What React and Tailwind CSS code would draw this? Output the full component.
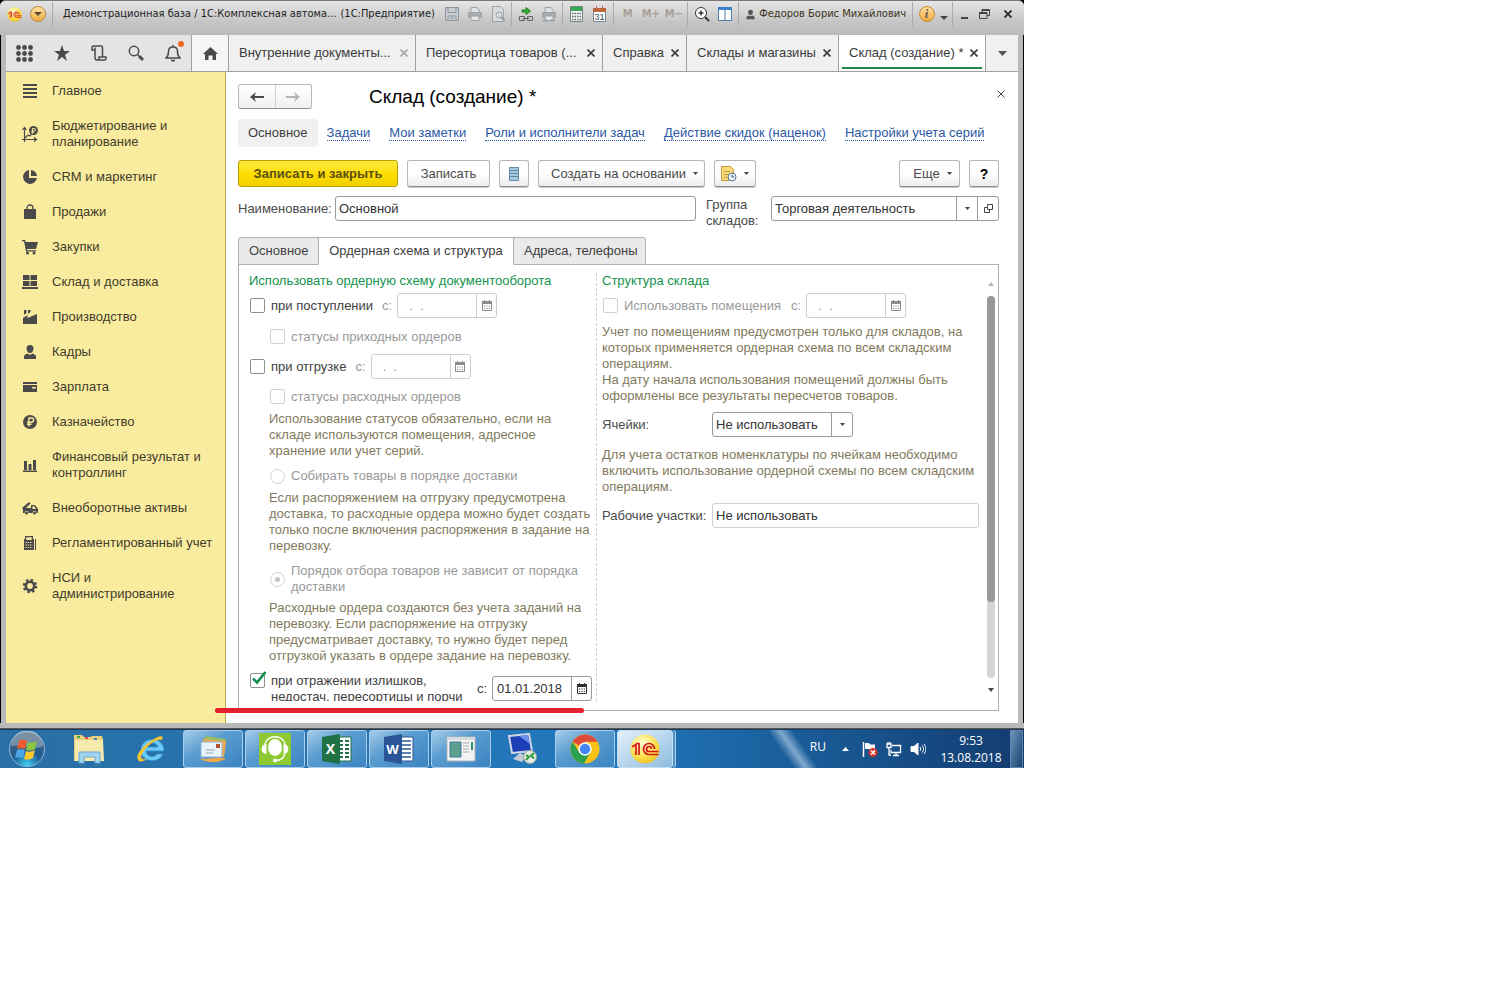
import { useState } from 'react';
import clsx from 'clsx';

const NAV_ITEMS = [
  { label: 'Главное', icon: 'lines' },
  { label: 'Бюджетирование и планирование', icon: 'budget', tall: true },
  { label: 'CRM и маркетинг', icon: 'pie' },
  { label: 'Продажи', icon: 'bag' },
  { label: 'Закупки', icon: 'cart' },
  { label: 'Склад и доставка', icon: 'boxes' },
  { label: 'Производство', icon: 'factory' },
  { label: 'Кадры', icon: 'person' },
  { label: 'Зарплата', icon: 'card' },
  { label: 'Казначейство', icon: 'ruble' },
  { label: 'Финансовый результат и контроллинг', icon: 'chart', tall: true },
  { label: 'Внеоборотные активы', icon: 'truck' },
  { label: 'Регламентированный учет', icon: 'calc' },
  { label: 'НСИ и администрирование', icon: 'gear', tall: true },
];

const NAV_ICONS = {
  lines: <path d="M1 1h14v2H1zM1 5h14v2H1zM1 9h14v2H1zM1 13h14v2H1z" />,
  budget: (
    <>
      <path d="M2.500 16V2M0 13.500h14M.5 4l2-2.500 2 2.500M12 11.500l2.500 2-2.500 2M3 12l3-3 2 1 2-3" fill="none" stroke="currentColor" strokeWidth="1.200" />
      <circle cx="11.500" cy="4.500" r="4.500" />
      <path d="M10.500 7.500v-5h1.800a1.300 1.300 0 0 1 0 2.600H9.300M9.300 6.300h2.700" fill="none" stroke="#faec9e" />
    </>
  ),
  pie: <path d="M7 1a7 7 0 1 0 8 8H7zM9 1v6h6a7 7 0 0 0-6-6z" />,
  bag: (
    <>
      <path d="M2 5h12v10H2z" />
      <path d="M5 8V4a3 3 0 0 1 6 0v4" fill="none" stroke="currentColor" strokeWidth="1.300" />
    </>
  ),
  cart: (
    <>
      <path d="M0 1h3l.6 2H16l-2 7H4.800l.4 1.300H14v1.200H4L2 2.300H0z" />
      <circle cx="5.500" cy="14" r="1.500" />
      <circle cx="12" cy="14" r="1.500" />
    </>
  ),
  boxes: <path d="M1 1h6.500v5H1zM8.500 1H15v5H8.500zM1 7h6.500v5H1zM8.500 7H15v5H8.500zM0 13h16v2H0z" />,
  factory: <path d="M1 15V9l4.500-3v3L15 5v10zM2 1h2.500v3L2 6zM6 1h2.500v2L6 5z" />,
  person: <path d="M8 1a3.500 3.500 0 0 1 3.500 3.500C11.500 7 10 9 8 9S4.500 7 4.500 4.500A3.500 3.500 0 0 1 8 1zM2 15v-2.500C2 11 4 10 5.500 9.500L8 11l2.500-1.500C12 10 14 11 14 12.500V15z" />,
  card: <path d="M1 3h14v2H1zM1 6h14v7H1zM10 8v1.500h4V8z" fillRule="evenodd" />,
  ruble: (
    <>
      <circle cx="8" cy="8" r="7" />
      <path d="M7 12.500V4h2.500a2 2 0 0 1 0 4.200H5M5 10.300h4.500" fill="none" stroke="#faec9e" strokeWidth="1.400" />
    </>
  ),
  chart: <path d="M2 4h3v9H2zM6.500 7h3v6h-3zM11 3h3v10h-3zM1 13.500h14V15H1z" />,
  truck: (
    <>
      <path d="M0 8l7-6 1.500 1.500L4 8h5V5h4l3 4v4h-1.500a2 2 0 0 0-4 0h-4a2 2 0 0 0-4 0H1V9.500zM10.500 6.300V9H14l-1.800-2.700z" fillRule="evenodd" />
      <circle cx="4.500" cy="13" r="1.500" />
      <circle cx="12.500" cy="13" r="1.500" />
    </>
  ),
  calc: (
    <>
      <path d="M3 1h8v3h1v11H2V4h1zM4.300 2.300V5h5.400V2.300z" fillRule="evenodd" />
      <path d="M3.500 7.500h7M3.500 10h7M3.500 12.500h7" stroke="#faec9e" strokeDasharray="1.300 1" />
      <path d="M13 4h1v11h-1z" />
    </>
  ),
  gear: (
    <>
      <circle cx="8" cy="8" r="4.200" fill="none" stroke="currentColor" strokeWidth="2.600" />
      <circle cx="8" cy="8" r="6" fill="none" stroke="currentColor" strokeWidth="2.500" strokeDasharray="2.360 2.350" />
    </>
  ),
};

const WINDOW_TABS = [
  { label: 'Внутренние документы...', width: 'w-[187px]', faded: true },
  { label: 'Пересортица товаров (...', width: 'w-[187px]' },
  { label: 'Справка', width: 'w-[84px]' },
  { label: 'Склады и магазины', width: 'w-[152px]' },
  { label: 'Склад (создание) *', width: 'w-[147px]', active: true },
];

const LINKS = [
  'Задачи',
  'Мои заметки',
  'Роли и исполнители задач',
  'Действие скидок (наценок)',
  'Настройки учета серий',
];

const BUTTON =
  'flex h-[27px] items-center justify-center rounded-[3px] border border-[#b5b5b5] border-b-[#8e8e8e] bg-linear-to-b from-white from-50% to-[#ececec] text-[#4a4a4a] shadow-[0_1px_0_#c8c8c8]';

function Caret({ className = 'h-[3px] w-[5px] fill-[#444]' }) {
  return (
    <svg viewBox="0 0 6 4" preserveAspectRatio="none" className={clsx('shrink-0', className)} aria-hidden="true">
      <path d="M0 0h6L3 4z" />
    </svg>
  );
}

function Cross({ className }) {
  return (
    <svg viewBox="0 0 8 8" className={clsx('h-2 w-2 shrink-0', className)} fill="none" stroke="currentColor" aria-hidden="true">
      <path d="M.5.5l7 7M7.500.5l-7 7" />
    </svg>
  );
}

function CalendarIcon() {
  return (
    <svg viewBox="0 0 10 11" className="h-[11px] w-[10px]" aria-hidden="true">
      <path d="M.5 2h9v8.500h-9z" fill="none" stroke="currentColor" />
      <path d="M0 1h10v3H0zM2 0h1v2H2zM7 0h1v2H7z" fill="currentColor" />
      <path d="M2 6h6M2 8.500h6" stroke="currentColor" strokeDasharray="1.200 1.200" />
    </svg>
  );
}

function OneC({ className }) {
  return (
    <svg viewBox="0 0 30 30" className={className} aria-hidden="true">
      <defs>
        <radialGradient id="onec" cx=".4" cy=".3" r=".8">
          <stop offset="0" stopColor="#fffbd0" />
          <stop offset=".6" stopColor="#fbe04a" />
          <stop offset="1" stopColor="#eeb81c" />
        </radialGradient>
      </defs>
      <circle cx="15" cy="15" r="14.500" fill="url(#onec)" />
      <g fill="none" stroke="#d3141c" strokeWidth="1.700">
        <path d="M2 13l4-2.500V21M9 21V9.500H6" />
        <path d="M24.500 15a5.500 5.500 0 1 0-5.500 5.500h9.500" />
        <path d="M21.500 15a2.500 2.500 0 1 0-2.500 2.500h9.500" />
      </g>
    </svg>
  );
}

/* ---------- title bar ---------- */

function ToolCell({ title, children, className, width = 'w-[23px]' }) {
  return (
    <button title={title} className={clsx('flex shrink-0 items-center justify-center', width, className)}>
      {children}
    </button>
  );
}

function ToolSep() {
  return <span className="mx-[2px] h-6 w-px shrink-0 bg-[#aaa]" />;
}

function Printer({ linked }) {
  return (
    <svg viewBox="0 0 16 16" className="h-4 w-4" fill="none" stroke="#9ca1a6">
      <path d="M4 6V1.500h6L12 4v2" fill="#dfe2e4" />
      <path d="M1.500 6.500h13v5h-13z" fill="#a9aeb3" />
      <path d="M4 10h8v4.500H4z" fill="#e6e8ea" />
      {linked && <path d="M2 14.500h12" strokeWidth="2" strokeDasharray="5 2" />}
    </svg>
  );
}

function TitleBar() {
  return (
    <header className="flex h-[35px] items-start rounded-t-md border-t border-[#777] bg-linear-to-b from-[#e6e6e6] via-[#c6c6c6] via-60% to-[#bababa] pt-px pr-[5px] font-['DejaVu_Sans_Condensed','DejaVu_Sans',sans-serif] text-[11px] text-[#222]">
      <div className="flex h-6 min-w-0 flex-1 items-center">
        <OneC className="ml-[7px] h-[15px] w-[15px] shrink-0" />
        <button title="Меню" className="ml-2 flex h-4 w-4 shrink-0 items-center justify-center rounded-full border border-[#b98a3d] bg-linear-to-b from-[#ffe3a0] to-[#f0ab3d]">
          <Caret className="h-1 w-2 fill-[#5a4a30]" />
        </button>
        <span className="ml-[6px] h-6 w-px bg-[#aaa]" />
        <span className="ml-[10px] whitespace-nowrap">Демонстрационная база / 1С:Комплексная автома...</span>
        <span className="ml-1 whitespace-nowrap">(1С:Предприятие)</span>
      </div>
      <div className="flex h-6 shrink-0 items-stretch">
        <ToolCell title="Сохранить">
          <svg viewBox="0 0 14 14" className="h-[14px] w-[14px]" fill="#c9ced2" stroke="#8f979d">
            <path d="M.5.5h13v13H.5zM3 .5h8v5H3zM3 9h8v4.500H3zM5 11h4" />
          </svg>
        </ToolCell>
        <ToolCell title="Печать"><Printer /></ToolCell>
        <ToolCell title="Предварительный просмотр">
          <svg viewBox="0 0 16 16" className="h-4 w-4" fill="#d9dcdf" stroke="#9ca1a6">
            <path d="M2.500.5h8l3 3v12h-11z" />
            <circle cx="9" cy="9" r="3" />
            <path d="M11 11l4 4" strokeWidth="2" />
          </svg>
        </ToolCell>
        <ToolSep />
        <ToolCell title="Перейти по ссылке">
          <svg viewBox="0 0 16 16" className="h-4 w-4" fill="none" stroke="#5c6468">
            <path d="M4 4h4V1.500L12.500 5 8 8.500V6H4z" fill="#35b035" stroke="#1d7d1d" />
            <path d="M1.500 10.500h5v4h-5zM9.500 10.500h5v4h-5zM4.500 12.500h7" />
          </svg>
        </ToolCell>
        <ToolCell title="Получить ссылку"><Printer linked /></ToolCell>
        <ToolSep />
        <ToolCell title="Калькулятор">
          <svg viewBox="0 0 13 16" className="h-4 w-[13px]">
            <path d="M.5.500h12v15H.5z" fill="#f5f5f5" stroke="#71877a" />
            <path d="M1 1h11v4H1z" fill="#34a853" />
            <path d="M2 7.500h9M2 10.500h9M2 13.500h9" stroke="#5b6b73" strokeWidth="1.500" strokeDasharray="1.500 1" />
          </svg>
        </ToolCell>
        <ToolCell title="Календарь">
          <svg viewBox="0 0 13 16" className="h-4 w-[13px]">
            <path d="M.5 2.500h12v13H.5z" fill="#fff" stroke="#7c8690" />
            <path d="M0 2h13v4H0zM3 0h1v3H3zM9 0h1v3H9z" fill="#b9663c" />
            <text x="6.500" y="14" textAnchor="middle" fontSize="9" fontFamily="Liberation Sans" fill="#33475c">31</text>
          </svg>
        </ToolCell>
        <ToolSep />
        <ToolCell className="font-bold text-[#a89f98]">M</ToolCell>
        <ToolCell className="font-bold text-[#a89f98]">M+</ToolCell>
        <ToolCell className="font-bold text-[#a89f98]">M−</ToolCell>
        <ToolSep />
        <ToolCell title="Масштаб">
          <svg viewBox="0 0 16 16" className="h-4 w-4" fill="#fff" stroke="#333">
            <circle cx="7" cy="7" r="5.500" />
            <path d="M4.500 7h5M7 4.500v5" strokeWidth="1.500" />
            <path d="M11 11l4 4" strokeWidth="2" />
          </svg>
        </ToolCell>
        <ToolCell title="Панели">
          <svg viewBox="0 0 14 14" className="h-[14px] w-[14px]">
            <path d="M.5.5h13v13H.5z" fill="#fff" stroke="#4b7eb0" />
            <path d="M0 0h14v3H0z" fill="#3f83c6" />
            <path d="M7 3v11" stroke="#4b7eb0" />
          </svg>
        </ToolCell>
        <ToolSep />
        <button className="flex items-center gap-[3px] px-1 text-[#3d3320]">
          <svg viewBox="0 0 16 16" className="h-[11px] w-[11px] fill-[#555]">{NAV_ICONS.person}</svg>
          Федоров Борис Михайлович
        </button>
        <ToolSep />
        <ToolCell title="О программе">
          <span className="flex h-4 w-4 items-center justify-center rounded-full border border-[#c48a2a] bg-linear-to-b from-[#ffe1a0] to-[#efa93b] font-['Liberation_Serif',serif] text-[13px] font-bold italic text-[#6b5a45]">i</span>
        </ToolCell>
        <button title="Еще" className="flex w-3 items-center justify-center pt-2"><Caret className="h-1 w-2 fill-[#444]" /></button>
        <ToolSep />
        <ToolCell title="Свернуть" width="w-[18px]"><span className="mt-2 h-[2px] w-[7px] bg-[#444]" /></ToolCell>
        <ToolCell title="Восстановить">
          <svg viewBox="0 0 11 10" className="h-[10px] w-[11px]" fill="none" stroke="#444">
            <path d="M3 3V.5h7.500v6H8M.5 3.500H8v6H.5zM.5 4.500H8M3 1.500h7.500" />
          </svg>
        </ToolCell>
        <ToolCell title="Закрыть"><Cross className="[stroke-width:1.600]" /></ToolCell>
      </div>
    </header>
  );
}

/* ---------- section tabs ---------- */

function TabStrip() {
  const cell = 'flex w-[37px] shrink-0 items-center justify-center text-[#4a4a4a]';
  return (
    <div className="flex h-[37px] border-b border-[#a0a0a0] bg-[#f0f0f0]">
      <div className="flex bg-[#e4e4e4]">
        <button title="Разделы" className={cell}>
          <svg viewBox="0 0 17 17" className="h-[17px] w-[17px]" fill="currentColor">
            {[2.5, 8.5, 14.5].map((y) => [2.5, 8.5, 14.5].map((x) => <circle key={`${x}-${y}`} cx={x} cy={y} r="2.400" />))}
          </svg>
        </button>
        <button title="Избранное" className={cell}>
          <svg viewBox="0 0 16 16" className="h-4 w-4" fill="currentColor"><path d="M8 0l2 6h6l-5 3.700 2 6.300-5-4-5 4 2-6.300L0 6h6z" /></svg>
        </button>
        <button title="История" className={cell}>
          <svg viewBox="0 0 16 16" className="h-4 w-4" fill="none" stroke="currentColor" strokeWidth="1.500">
            <path d="M3.500 5H1V2.500C1 1.500 1.500 1 2.500 1H10c1 0 1.500.5 1.500 1.500V12M4 2.500V13c0 1.500.8 2 2 2h7.500c1 0 1.500-.7 1.500-1.500V12H8v1.500C8 14.500 7 15 6 15" />
          </svg>
        </button>
        <button title="Поиск" className={cell}>
          <svg viewBox="0 0 16 16" className="h-4 w-4" fill="none" stroke="currentColor" strokeWidth="1.500">
            <circle cx="6" cy="6" r="4.700" />
            <path d="M9.500 9.500l1.500 1.500" />
            <path d="M11 11l4 3.800" strokeWidth="3" />
          </svg>
        </button>
        <button title="Оповещения" className={clsx(cell, 'relative')}>
          <svg viewBox="0 0 16 18" className="h-[18px] w-4" fill="none" stroke="currentColor" strokeWidth="1.500">
            <path d="M1 14c2-1.500 2.500-3 2.500-6.500C3.500 4.500 5.500 3 8 3s4.500 1.500 4.500 4.500c0 3.500.5 5 2.500 6.500zM8 3V1M6.500 15.500a1.500 1.500 0 0 0 3 0" />
          </svg>
          <span className="absolute top-[6px] right-[7px] h-[6px] w-[6px] rounded-full bg-[#f26b21]" />
        </button>
      </div>
      <button title="Начальная страница" className="flex w-[38px] shrink-0 items-center justify-center border-x border-[#a0a0a0] bg-[#f5f5f5] text-[#4a4a4a]">
        <svg viewBox="0 0 15 13" className="h-[13px] w-[15px]" fill="currentColor"><path d="M7.500 0L15 7h-2v6H9.500V8.500h-4V13H2V7H0z" /></svg>
      </button>
      {WINDOW_TABS.map((tab) => (
        <div
          key={tab.label}
          className={clsx(
            'relative flex shrink-0 items-center justify-between border-r border-[#a0a0a0] pr-[7px] pl-[10px] whitespace-nowrap text-[#3b3b3b]',
            tab.width,
            tab.active && 'bg-white'
          )}
        >
          <button>{tab.label}</button>
          <button title="Закрыть" className={clsx('[&_svg]:[stroke-width:1.600]', tab.faded && 'text-[#a5a5a5]')}><Cross /></button>
          {tab.active && <span className="absolute inset-x-[3px] bottom-[2px] h-[2px] bg-[#21834f]" />}
        </div>
      ))}
      <button title="Все окна" className="flex flex-1 items-center justify-center"><Caret className="h-[5px] w-[9px] fill-[#555]" /></button>
    </div>
  );
}

function Sidebar() {
  return (
    <nav className="w-[220px] shrink-0 border-r border-[#b5a94c] bg-[#faec9e] pt-px">
      {NAV_ITEMS.map((item) => (
        <a
          key={item.label}
          href="#"
          className={clsx('flex items-center pl-4 text-[#3f3c2c]', item.tall ? 'h-[51px] pr-6' : 'h-[35px] whitespace-nowrap')}
        >
          <svg viewBox="0 0 16 16" className="mr-[14px] h-4 w-4 shrink-0 text-[#4a4a4a]" fill="currentColor" aria-hidden="true">
            {NAV_ICONS[item.icon]}
          </svg>
          <span>{item.label}</span>
        </a>
      ))}
    </nav>
  );
}

/* ---------- form controls ---------- */

function CheckBox({ id, label, disabled, checked, onChange, className, labelClass }) {
  return (
    <div className={clsx('flex gap-[6px]', className)}>
      <span className="relative h-[15px] w-[15px] shrink-0">
        <input
          id={id}
          type="checkbox"
          disabled={disabled}
          checked={checked}
          onChange={onChange}
          className="block h-[15px] w-[15px] appearance-none rounded-[2px] border border-[#8f8f8f] bg-white disabled:border-[#d0d0d0]"
        />
        {checked && (
          <svg viewBox="0 0 15 15" className="pointer-events-none absolute -top-[2px] left-[2px] h-[15px] w-[15px]" fill="none" stroke="#0c9150" strokeWidth="2.600">
            <path d="M1 7.500l4 4L13.500 1" />
          </svg>
        )}
      </span>
      <label htmlFor={id} className={clsx(disabled ? 'text-[#999]' : 'text-[#404040]', labelClass)}>{label}</label>
    </div>
  );
}

function RadioRow({ id, label, checked }) {
  return (
    <div className="flex items-center gap-[6px] pl-[21px]">
      <span className="relative flex h-[15px] w-[15px] shrink-0 items-center justify-center">
        <input id={id} type="radio" name="order" disabled checked={!!checked} readOnly className="block h-[15px] w-[15px] appearance-none rounded-full border border-[#d0d0d0] bg-white" />
        {checked && <span className="absolute h-[5px] w-[5px] rounded-full bg-[#c4c4c4]" />}
      </span>
      <label htmlFor={id} className="text-[#999]">{label}</label>
    </div>
  );
}

function DateField({ id, value, disabled }) {
  return (
    <div className="flex shrink-0 items-center gap-[5px]">
      <label htmlFor={id} className={disabled ? 'text-[#999]' : 'text-[#404040]'}>с:</label>
      <div className={clsx('flex h-[25px] w-[100px] rounded-[3px] border bg-white', disabled ? 'border-[#cfcfcf] text-[#8c8c8c]' : 'border-[#999] text-[#333]')}>
        <input id={id} disabled={disabled} defaultValue={value ?? '  .  .'} className="w-[78px] min-w-0 bg-transparent pl-1 whitespace-pre outline-none" />
        <button title="Выбрать дату" disabled={disabled} className={clsx('flex flex-1 items-center justify-center border-l', disabled ? 'border-[#cfcfcf]' : 'border-[#999]')}>
          <CalendarIcon />
        </button>
      </div>
    </div>
  );
}

function Hint({ children, className }) {
  return <p className={clsx('text-[#817a5c]', className)}>{children}</p>;
}

function OrderScheme() {
  const [income, setIncome] = useState(false);
  const [outcome, setOutcome] = useState(false);
  const [surplus, setSurplus] = useState(true);

  return (
    <section className="w-[348px] shrink-0 border-r border-dashed border-[#cfcfcf]">
      <h2 className="text-[#14934f]">Использовать ордерную схему документооборота</h2>
      <div className="mt-1 flex items-center gap-[9px] pl-px">
        <CheckBox id="income" label="при поступлении" checked={income} onChange={() => setIncome(!income)} />
        <DateField id="income-date" disabled />
      </div>
      <CheckBox id="income-status" label="статусы приходных ордеров" disabled className="mt-[11px] pl-[21px]" />
      <div className="mt-[9px] flex items-center gap-[9px] pl-px">
        <CheckBox id="outcome" label="при отгрузке" checked={outcome} onChange={() => setOutcome(!outcome)} />
        <DateField id="outcome-date" disabled />
      </div>
      <CheckBox id="outcome-status" label="статусы расходных ордеров" disabled className="mt-[10px] pl-[21px]" />
      <Hint className="mt-[6px] pr-10 pl-5">
        Использование статусов обязательно, если на складе используются помещения, адресное хранение или учет серий.
      </Hint>
      <div className="mt-[9px]"><RadioRow id="by-delivery" label="Собирать товары в порядке доставки" /></div>
      <Hint className="mt-[6px] pl-5">
        Если распоряжением на отгрузку предусмотрена доставка, то расходные ордера можно будет создать только после включения распоряжения в задание на перевозку.
      </Hint>
      <div className="mt-[9px] pr-2"><RadioRow id="independent" checked label="Порядок отбора товаров не зависит от порядка доставки" /></div>
      <Hint className="mt-[5px] pr-1 pl-5">
        Расходные ордера создаются без учета заданий на перевозку. Если распоряжение на отгрузку предусматривает доставку, то нужно будет перед отгрузкой указать в ордере задание на перевозку.
      </Hint>
      <div className="mt-[9px] flex items-end justify-between pr-1 pl-px">
        <CheckBox
          id="surplus"
          label="при отражении излишков, недостач, пересортицы и порчи"
          checked={surplus}
          onChange={() => setSurplus(!surplus)}
          labelClass="h-7 w-[200px] overflow-hidden"
        />
        <DateField id="surplus-date" value="01.01.2018" />
      </div>
    </section>
  );
}

function WarehouseStructure() {
  return (
    <section className="min-w-0 flex-1 pl-[5px]">
      <h2 className="text-[#14934f]">Структура склада</h2>
      <div className="mt-1 flex items-center gap-[10px] pl-px">
        <CheckBox id="rooms" label="Использовать помещения" disabled />
        <DateField id="rooms-date" disabled />
      </div>
      <Hint className="mt-[6px]">
        Учет по помещениям предусмотрен только для складов, на которых применяется ордерная схема по всем складским операциям.
        <br />
        На дату начала использования помещений должны быть оформлены все результаты пересчетов товаров.
      </Hint>
      <div className="mt-2 flex items-center">
        <label htmlFor="cells" className="w-[110px] text-[#4a4a4a]">Ячейки:</label>
        <div className="relative flex">
          <select id="cells" className="h-[25px] w-[141px] appearance-none rounded-[3px] border border-[#999] bg-white pl-[3px] text-[#333]">
            <option>Не использовать</option>
          </select>
          <span className="pointer-events-none absolute inset-y-px right-px flex w-[21px] items-center justify-center border-l border-[#999]"><Caret /></span>
        </div>
      </div>
      <Hint className="mt-[10px]">
        Для учета остатков номенклатуры по ячейкам необходимо включить использование ордерной схемы по всем складским операциям.
      </Hint>
      <div className="mt-2 flex items-center">
        <label htmlFor="areas" className="w-[110px] shrink-0 text-[#4a4a4a]">Рабочие участки:</label>
        <input id="areas" readOnly value="Не использовать" className="h-[25px] min-w-0 flex-1 rounded-[3px] border border-[#cfcfcf] pl-[3px] text-[#333]" />
      </div>
    </section>
  );
}

function ScrollBar() {
  return (
    <div className="ml-2 flex w-2 shrink-0 flex-col items-center pt-[9px] pb-[9px]" aria-hidden="true">
      <Caret className="h-1 w-[6px] rotate-180 fill-[#b5b5b5]" />
      <div className="mt-[10px] mb-[10px] w-2 flex-1 rounded-full bg-[#d5d5d5]">
        <div className="h-4/5 rounded-full bg-[#999]" />
      </div>
      <Caret className="h-1 w-[6px] fill-[#444]" />
    </div>
  );
}

function FormPage() {
  const formTab = 'h-7 border border-[#b0b0b0] px-[10px] whitespace-nowrap text-[#3f3f3f]';
  return (
    <main className="min-w-0 flex-1 bg-white pt-3 pr-[19px] pb-3 pl-3">
      <div className="flex h-[25px] items-center">
        <div className="flex h-[25px] w-[74px] rounded-[3px] border border-[#b5b5b5] border-b-[#8e8e8e] bg-linear-to-b from-white to-[#f0f0f0]">
          <button title="Назад" className="flex flex-1 items-center justify-center text-[#4a4a4a]">
            <svg viewBox="0 0 14 10" className="h-[10px] w-[14px]" fill="currentColor"><path d="M0 5l6-5-1.500 4H14v2H4.500L6 10z" /></svg>
          </button>
          <button title="Вперед" className="flex flex-1 items-center justify-center border-l border-[#d0d0d0] text-[#b3b3b3]">
            <svg viewBox="0 0 14 10" className="h-[10px] w-[14px]" fill="currentColor"><path d="M14 5L8 0l1.500 4H0v2h9.500L8 10z" /></svg>
          </button>
        </div>
        <h1 className="ml-[57px] flex-1 text-[19px] leading-6 text-black">Склад (создание) *</h1>
        <button title="Закрыть" className="-mr-[10px] flex h-5 w-4 items-center justify-center self-start text-[#444]"><Cross /></button>
      </div>

      <div className="mt-[10px] flex h-7 items-center gap-[19px] whitespace-nowrap">
        <a href="#" className="-mr-[10px] flex h-7 items-center rounded-[4px] bg-[#f0f0f0] px-[10px] text-[#3f3f3f]">Основное</a>
        {LINKS.map((link) => (
          <a key={link} href="#" className="border-b border-dotted border-[#2b57a4] leading-[14px] text-[#2b57a4]">{link}</a>
        ))}
      </div>

      <div className="mt-[13px] flex gap-[9px]">
        <button className="flex h-[27px] w-[160px] items-center justify-center rounded-[3px] border border-[#b8a000] bg-linear-to-b from-[#ffe838] via-[#ffdf00] to-[#f0d000] font-bold text-[#5c4f10]">Записать и закрыть</button>
        <button className={clsx(BUTTON, 'w-[83px]')}>Записать</button>
        <button title="Список" className={clsx(BUTTON, 'w-[30px]')}>
          <svg viewBox="0 0 10 14" className="h-[14px] w-[10px]">
            <path d="M.5.500h9v13h-9z" fill="#a9c8dc" stroke="#5f8aa8" />
            <path d="M1 3.500h8M1 6.500h8M1 9.500h8" stroke="#5f8aa8" />
          </svg>
        </button>
        <button className={clsx(BUTTON, 'w-[167px] gap-[7px] pl-[6px]')}>Создать на основании <Caret /></button>
        <button title="Отчеты" className={clsx(BUTTON, 'w-[42px] gap-[7px]')}>
          <svg viewBox="0 0 16 16" className="h-4 w-4">
            <path d="M.5.500h9l3 3v11H.5z" fill="#f6d978" stroke="#c79b3b" />
            <path d="M3 5.500h6M3 8.500h4M3 11.500h3" stroke="#c79b3b" />
            <circle cx="11" cy="11" r="4" fill="#e9f0f8" stroke="#5b7596" />
            <path d="M11 8.500V11h2" fill="none" stroke="#3e5878" />
          </svg>
          <Caret />
        </button>
        <span className="flex-1" />
        <button className={clsx(BUTTON, 'w-[61px] gap-[7px] pl-[6px]')}>Еще <Caret /></button>
        <button title="Справка" className={clsx(BUTTON, 'w-[30px] text-[14px] font-bold text-black')}>?</button>
      </div>

      <div className="mt-[9px] flex items-start">
        <label htmlFor="name" className="w-[97px] shrink-0 pt-[5px] text-[#4a4a4a]">Наименование:</label>
        <input id="name" defaultValue="Основной" className="h-[25px] min-w-0 flex-1 rounded-[3px] border border-[#999] pl-[3px] text-[#333]" />
        <label htmlFor="group" className="ml-[10px] w-[65px] shrink-0 pt-px text-[#4a4a4a]">Группа складов:</label>
        <div className="relative flex h-[25px] w-[228px] shrink-0 rounded-[3px] border border-[#999]">
          <select id="group" className="min-w-0 flex-1 appearance-none bg-transparent pl-[3px] text-[#333]">
            <option>Торговая деятельность</option>
          </select>
          <span className="pointer-events-none absolute inset-y-0 right-5 flex w-[22px] items-center justify-center border-l border-[#999]"><Caret /></span>
          <button title="Открыть" className="flex w-[21px] items-center justify-center border-l border-[#999]">
            <svg viewBox="0 0 9 9" className="h-[9px] w-[9px]" fill="none" stroke="#444"><path d="M3.500.5h5v5h-5zM3 3.500H.5v5h5V6" /></svg>
          </button>
        </div>
      </div>

      <div className="mt-2 flex">
        <button className={clsx(formTab, 'w-[81px] rounded-tl-[3px] bg-[#eaeaea]')}>Основное</button>
        <button className={clsx(formTab, 'relative -ml-px w-[196px] border-b-white bg-white')}>Ордерная схема и структура</button>
        <button className={clsx(formTab, '-ml-px w-[133px] rounded-tr-[3px] bg-[#eaeaea]')}>Адреса, телефоны</button>
      </div>
      <div className="-mt-px flex border border-[#b0b0b0] pt-2 pr-[3px] pb-[9px] pl-[10px]">
        <OrderScheme />
        <WarehouseStructure />
        <ScrollBar />
      </div>
    </main>
  );
}

/* ---------- taskbar ---------- */

const TASKS = [
  {
    name: 'Проводник',
    icon: (
      <>
        <path d="M1 5V2h8l2 2h6l2-1h10l1 3v22H1z" fill="#e9cf7a" />
        <path d="M2 7h28l1 21H2z" fill="#f8e9ad" />
        <path d="M4 3h3v2H4z" fill="#3aa648" /><path d="M12 4h3v2h-3z" fill="#d24a3a" /><path d="M21 5h3v2h-3z" fill="#3b83c8" />
        <path d="M6 30V19h21v11h-5v-6H11v6z" fill="#9fd3ee" stroke="#6aa9d0" />
      </>
    ),
  },
  {
    name: 'Internet Explorer',
    icon: (
      <>
        <path d="M29 18H11c.5 6 8 7.500 11 3h6c-4 10-22 9-22-4 0-14 23-15 23 1zM11.500 14H23c-1-5.500-10.500-5.500-11.500 0z" fill="#6cc9f5" stroke="#258fd0" strokeWidth=".7" />
        <path d="M27 7c3-6-4-4-11 1C7 14 0 22 3 27c2 3 6 1 9-1-5 1-7-1-5-5 4-8 14-16 20-14z" fill="#f4c430" />
      </>
    ),
  },
  {
    name: 'Почта',
    open: true,
    icon: (
      <>
        <path d="M8 3l21 3-2 17-20-3z" fill="#8fbf62" /><path d="M6 6l23 2-2 16-21-2z" fill="#f3a74c" />
        <path d="M4 9h21v15H4z" fill="#eaf3fb" stroke="#8fb3d4" /><path d="M19 11h4v4h-4z" fill="#b4532e" />
        <path d="M9 17h9M9 20h7" stroke="#8aa" /><path d="M1 24c7 5 18-2 28 2-8 4-20 5-28-2z" fill="#f0a64b" />
      </>
    ),
  },
  {
    name: 'Телефония',
    open: true,
    icon: (
      <>
        <path d="M0 0h32v32H0z" fill="#8fc931" />
        <ellipse cx="16" cy="14.500" rx="7" ry="8.500" fill="#fff" />
        <path d="M6 12C7 1 25 1 26 12" fill="none" stroke="#fff" strokeWidth="1.300" />
        <path d="M7.500 11c-6.500 0-6.500 10 0 10zM24.500 11c6.500 0 6.500 10 0 10z" fill="#fff" />
        <path d="M26 20c-1 5-4 7.500-9 7.500" fill="none" stroke="#fff" strokeWidth="1.300" /><circle cx="16" cy="27.500" r="2" fill="#fff" />
      </>
    ),
  },
  {
    name: 'Excel',
    open: true,
    icon: (
      <>
        <path d="M16 4h14v24H16z" fill="#fff" stroke="#217346" />
        <path d="M18 8h10M18 12h10M18 16h10M18 20h10M18 24h10" stroke="#217346" strokeWidth="2" strokeDasharray="4 2" />
        <path d="M1 4l18-3v30L1 28z" fill="#1f7244" />
        <text x="9.500" y="21" textAnchor="middle" fontSize="14" fontWeight="bold" fontFamily="Open Sans" fill="#fff">X</text>
      </>
    ),
  },
  {
    name: 'Word',
    open: true,
    icon: (
      <>
        <path d="M16 4h14v24H16z" fill="#fff" stroke="#2b579a" />
        <path d="M19 8h9M19 12h9M19 16h9M19 20h9M19 24h9" stroke="#2b579a" strokeWidth="1.500" />
        <path d="M1 4l18-3v30L1 28z" fill="#2a5699" />
        <text x="9.500" y="21" textAnchor="middle" fontSize="13" fontWeight="bold" fontFamily="Open Sans" fill="#fff">W</text>
      </>
    ),
  },
  {
    name: 'Приложение',
    open: true,
    icon: (
      <>
        <path d="M2 4h28v24H2z" fill="#f4f4f2" stroke="#b0b4b8" /><path d="M2 4h28v3H2z" fill="#d7dadd" />
        <path d="M5 9h11v15H5z" fill="#5d9f8c" stroke="#4378a8" /><path d="M18 10h6M18 13h6M18 16h6M18 19h6" stroke="#aaa" />
        <path d="M26 9h2v8h-2z" fill="#2f8a77" />
      </>
    ),
  },
  {
    name: 'Удаленный рабочий стол',
    icon: (
      <>
        <path d="M2 3l20-2 3 17-20 2z" fill="#1c3fb8" stroke="#cfd8e4" strokeWidth="2" />
        <path d="M12 3l9-1 2 9z" fill="#6e90ee" /><path d="M6 26l7-6 6 3-4 6z" fill="#c4ccd6" />
        <circle cx="23" cy="24" r="6.500" fill="#e4ece4" stroke="#98a898" />
        <path d="M19 22l3 2-3 3M27 20l-3 2.500 3 3" fill="none" stroke="#2f9a3c" strokeWidth="2" />
      </>
    ),
  },
  {
    name: 'Chrome',
    open: true,
    icon: (
      <>
        <circle cx="16" cy="16" r="14.500" fill="#fbc116" />
        <path d="M16 16L3.500 8.700a14.500 14.500 0 0 1 25.100 0H16z" fill="#de4b3b" />
        <path d="M3.500 8.700A14.500 14.500 0 0 0 15 30.500l6.500-11.200L16 16l-5.500 3.500z" fill="#2da14f" />
        <circle cx="16" cy="16" r="6.700" fill="#fff" /><circle cx="16" cy="16" r="5.200" fill="#4486f4" />
      </>
    ),
  },
];

function Taskbar() {
  return (
    <footer className="flex h-[39px] items-stretch border-t border-[#1b3a5c] bg-linear-to-r from-[#2a6fa5] via-[#2178bd] via-60% to-[#123c70] text-white">
      <button title="Пуск" className="flex w-[58px] items-center justify-center pr-1">
        <svg viewBox="0 0 36 36" className="h-9 w-9">
          <defs>
            <radialGradient id="orb" cx=".5" cy=".95" r=".8">
              <stop offset="0" stopColor="#3fd0f5" />
              <stop offset=".5" stopColor="#1d5d94" />
              <stop offset="1" stopColor="#42607c" />
            </radialGradient>
          </defs>
          <circle cx="18" cy="18" r="17.500" fill="url(#orb)" stroke="#8fb8d8" />
          <path d="M2 15a16 16 0 0 1 32 0c-8 5-22-2-32 0z" fill="#fff" opacity=".3" />
          <path d="M10 10c3-2 5-1 8 0l-2 8c-3-1-5-1-8 0z" fill="#ee5d2d" />
          <path d="M19 11c3 1 5 1 9-1l-2 8c-3 2-6 2-9 1z" fill="#8dc63f" />
          <path d="M8 19c3-1 5-1 8 0l-2 8c-3-1-5-1-8 0z" fill="#4aa8e8" />
          <path d="M17 20c3 1 5 1 9-1l-2 8c-4 2-6 2-9 1z" fill="#fdc82f" />
        </svg>
      </button>
      {TASKS.map((task) => (
        <button
          key={task.name}
          title={task.name}
          className={clsx(
            'mx-px flex w-[60px] shrink-0 items-center justify-center rounded-[3px] border',
            task.open ? 'border-[#a9cdea] bg-linear-to-br from-[#a5cce8] via-[#5b9dd0] via-40% to-[#3a84c2]' : 'border-transparent'
          )}
        >
          <svg viewBox="0 0 32 32" className="h-8 w-8">{task.icon}</svg>
        </button>
      ))}
      <button title="1С:Предприятие" className="ml-px flex w-[56px] shrink-0 items-center justify-center rounded-[3px] border border-[#c5def0] bg-linear-to-br from-[#e4f0f8] to-[#8dbce0]">
        <OneC className="h-[30px] w-[30px]" />
      </button>
      <span className="w-[3px] rounded-r-[3px] border-r border-[#a9cdea] bg-[#4d92c8]" />
      <div className="flex flex-1 items-center justify-end bg-[linear-gradient(55deg,transparent_48%,#7fa9cd_53%,transparent_58%)] bg-[length:220px_40px] bg-no-repeat font-['Open_Sans',sans-serif] text-[12px]">
        <span className="pb-1">RU</span>
        <button title="Скрытые значки" className="ml-4 flex items-center"><Caret className="h-1 w-[7px] rotate-180 fill-white" /></button>
        <svg viewBox="0 0 16 16" className="ml-[13px] h-4 w-4">
          <path d="M1.500 1v15" stroke="#fff" strokeWidth="1.500" /><path d="M3 2h4l1 1.500h5V9H8L7 8H3z" fill="#fff" />
          <circle cx="11" cy="11.500" r="4.500" fill="#d8322a" /><path d="M9 9.500l4 4M13 9.500l-4 4" stroke="#fff" strokeWidth="1.500" />
        </svg>
        <svg viewBox="0 0 16 16" className="ml-2 h-4 w-4" fill="none" stroke="#fff" strokeWidth="1.300">
          <path d="M6 4.500h8.500v7H5V9M7 14.500h6M10 12v2M1 3h4v3.500H1zM2 3V1M4 3V1M3 7v7h2" />
        </svg>
        <svg viewBox="0 0 16 16" className="ml-2 h-4 w-4" fill="none" stroke="#fff">
          <path d="M1 5.500h3L8 2v12l-4-3.500H1z" fill="#fff" /><path d="M10 6c1 1.300 1 2.700 0 4M12 4.500c2 2.300 2 4.700 0 7M14 3c2.500 3.300 2.500 6.700 0 10" />
        </svg>
        <time className="mr-1 ml-[10px] w-[70px] text-center leading-[17px]">9:53<br />13.08.2018</time>
      </div>
      <button title="Показать рабочий стол" className="mr-px w-[13px] border border-[#5f87ae] bg-linear-to-br from-[#6e93b8] to-[#1d4373]" />
    </footer>
  );
}

export default function App() {
  return (
    <div className="min-h-screen bg-white font-['Liberation_Sans',Arial,sans-serif] text-[13px] leading-4">
      <div className="relative w-full max-w-5xl bg-black">
        <div className="rounded-t-md border-b border-[#555] bg-[#b9b9b9] pb-[5px]">
          <TitleBar />
          <div className="border-x border-black px-[5px]">
            <TabStrip />
            <div className="flex">
              <Sidebar />
              <FormPage />
            </div>
          </div>
        </div>
        <Taskbar />
        {/* hand-drawn underline over the form */}
        <span className="absolute bottom-[55px] left-[215px] h-[5px] w-[369px] rounded-full bg-[#e3202b]" />
      </div>
    </div>
  );
}
